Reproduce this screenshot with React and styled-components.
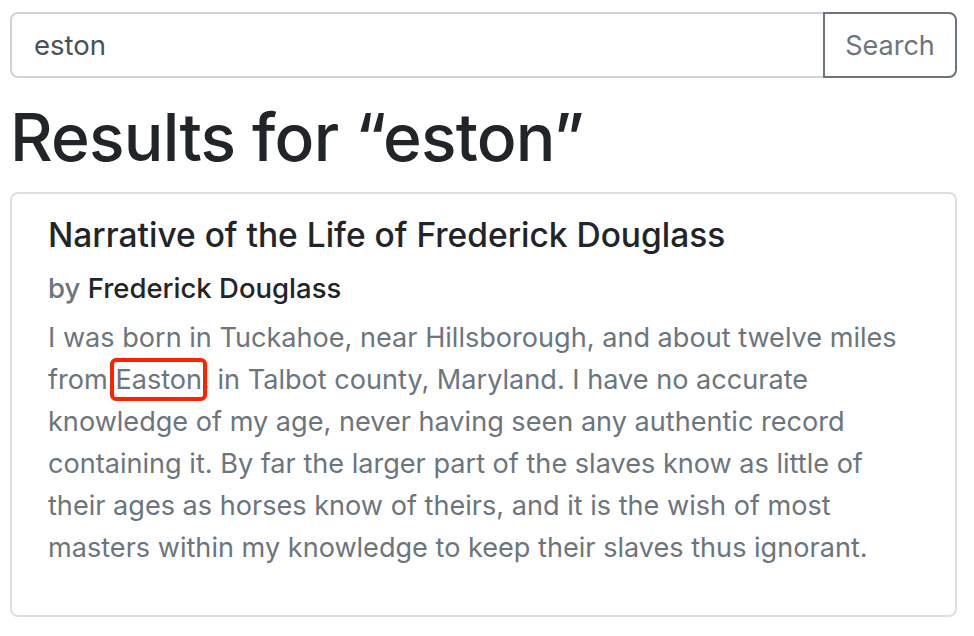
import React, {useState} from 'react'
import styled, {createGlobalStyle} from 'styled-components'

const Global = createGlobalStyle`
  body {
    margin: 0;
    background: #fff;
    font-family: Inter, "Liberation Sans", sans-serif;
    color: #212529;
  }
`

const Page = styled.div`
  padding: 12px 17px 0 10px;
`

const SearchBar = styled.form`
  display: flex;
  height: 66px;
`

const SearchInput = styled.input`
  flex: 1;
  min-width: 0;
  box-sizing: border-box;
  height: 100%;
  margin: 0;
  padding: 0 22px;
  border: 2px solid #ced4da;
  border-right: none;
  border-radius: 8px 0 0 8px;
  font: 400 27.5px Inter, "Liberation Sans", sans-serif;
  color: #495057;
  outline: none;
`

const SearchButton = styled.button`
  box-sizing: border-box;
  width: 134px;
  height: 100%;
  margin: 0;
  border: 2px solid #6c757d;
  border-radius: 0 8px 8px 0;
  background: #fff;
  font: 400 27px Inter, "Liberation Sans", sans-serif;
  color: #6c757d;
`

const Heading = styled.h1`
  margin: 17px 0 13px;
  font-size: 66px;
  font-weight: 500;
  line-height: 84px;
  letter-spacing: -0.8px;
  color: #212529;
`

const Card = styled.div`
  border: 2px solid #dfdfdf;
  border-radius: 8px;
  padding: 21px 36px 46px 36px;
`

const Title = styled.h5`
  margin: 0 0 15px;
  font-size: 33.5px;
  font-weight: 500;
  line-height: 41px;
  color: #212529;
`

const Byline = styled.h6`
  margin: 0 0 12px;
  font-size: 27.5px;
  font-weight: 500;
  line-height: 34px;
  color: #6c757d;
`

const Author = styled.span`
  color: #212529;
`

const Excerpt = styled.p`
  margin: 0;
  font-size: 27.1px;
  line-height: 42px;
  color: #6c757d;
`

const Hit = styled.span`
  outline: 4px solid #ff2200;
  outline-offset: 1px;
  border-radius: 1px;
`

const result = {
  title: 'Narrative of the Life of Frederick Douglass',
  author: 'Frederick Douglass',
  before: 'I was born in Tuckahoe, near Hillsborough, and about twelve miles from ',
  match: 'Easton',
  after: ', in Talbot county, Maryland. I have no accurate knowledge of my age, never having seen any authentic record containing it. By far the larger part of the slaves know as little of their ages as horses know of theirs, and it is the wish of most masters within my knowledge to keep their slaves thus ignorant.',
}

export default function App() {
  const [query, setQuery] = useState('eston')

  return (
    <Page>
      <Global />
      <SearchBar onSubmit={e => e.preventDefault()}>
        <SearchInput value={query} onChange={e => setQuery(e.target.value)} />
        <SearchButton type="submit">Search</SearchButton>
      </SearchBar>
      <Heading>Results for “{query}”</Heading>
      <Card>
        <Title>{result.title}</Title>
        <Byline>by <Author>{result.author}</Author></Byline>
        <Excerpt>
          {result.before}<Hit>{result.match}</Hit>{result.after}
        </Excerpt>
      </Card>
    </Page>
  )
}
